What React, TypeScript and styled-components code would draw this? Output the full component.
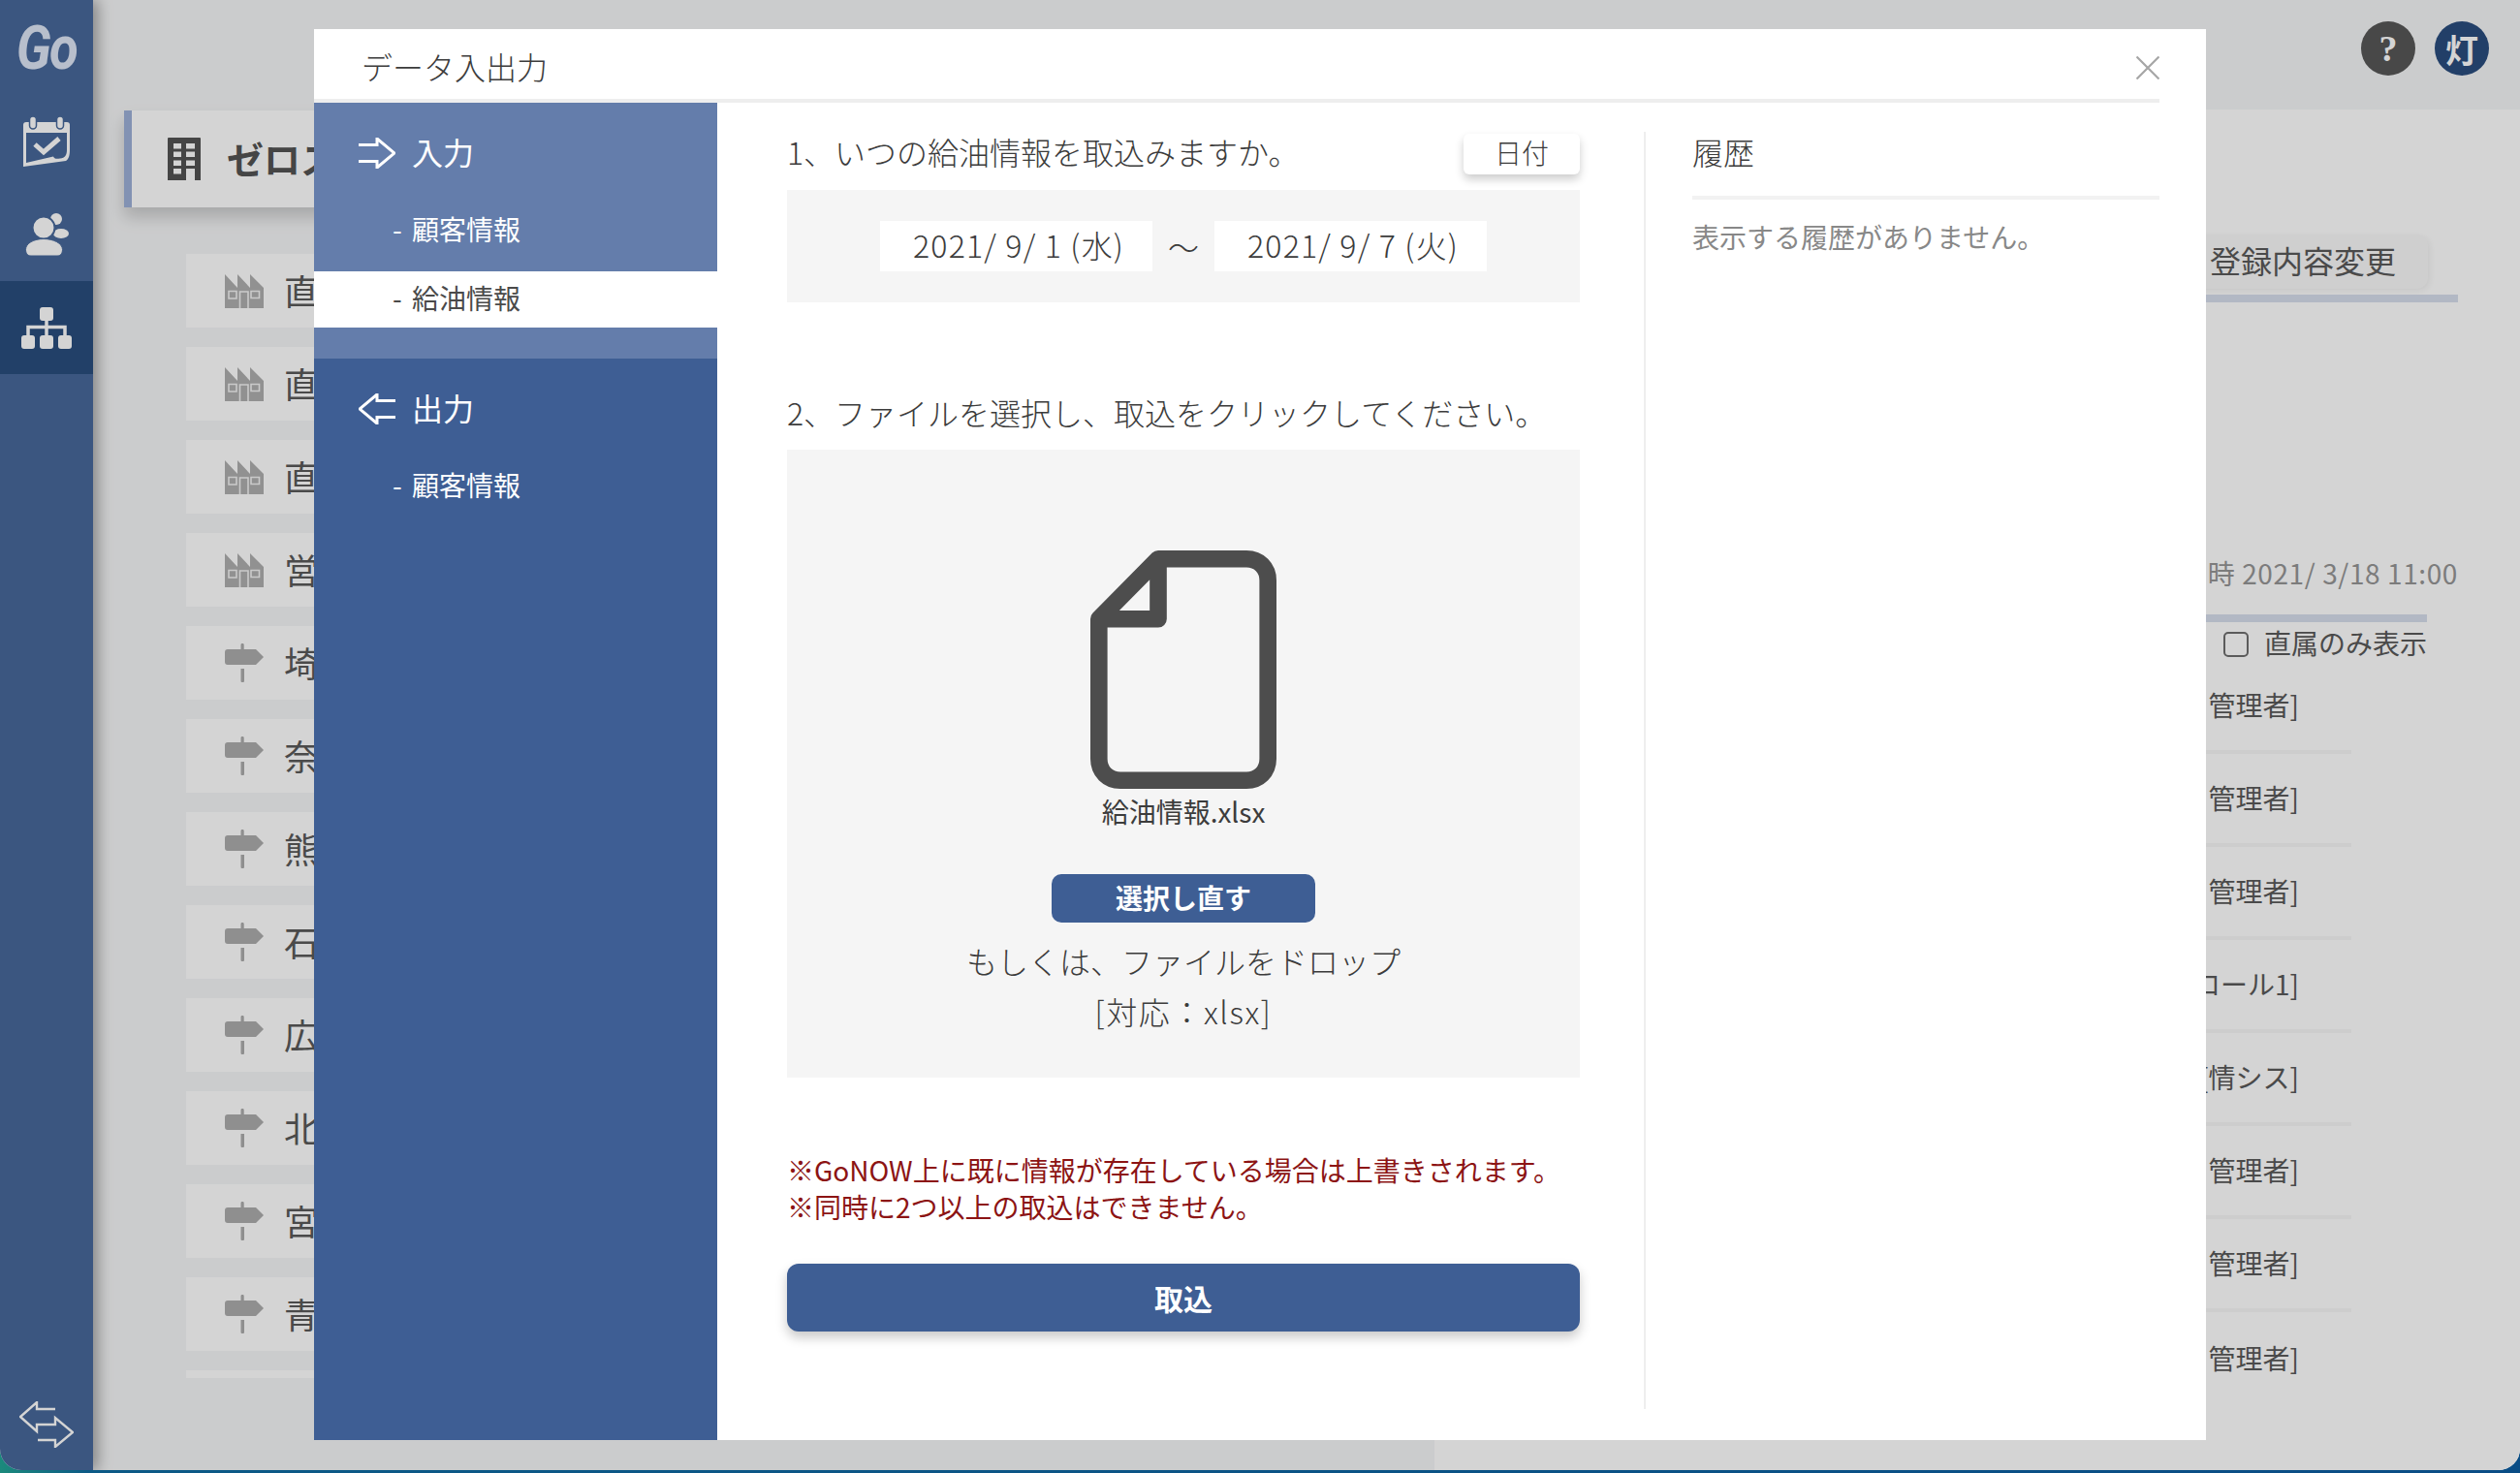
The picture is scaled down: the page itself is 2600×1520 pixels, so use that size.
import React from 'react';
import styled, { createGlobalStyle } from 'styled-components';

const GlobalStyle = createGlobalStyle`
  html, body {
    margin: 0;
    padding: 0;
  }
  body {
    width: 2600px;
    height: 1520px;
    overflow: hidden;
    font-family: "Noto Sans CJK JP", "Noto Sans", sans-serif;
    font-weight: 300;
    color: #3c3c3c;
  }
  * {
    box-sizing: border-box;
  }
`;

const Desktop = styled.div`
  width: 2600px;
  height: 1520px;
  background: linear-gradient(90deg, #1c8a7c 0, #0c5a86 90px, #0a4d85 100%);
`;

const AppFrame = styled.div`
  position: relative;
  display: flex;
  width: 2600px;
  height: 1517px;
  overflow: hidden;
  border-radius: 0 0 22px 22px;
  background: #f5f6f7;
`;

const Sidebar = styled.nav`
  position: relative;
  z-index: 1;
  display: flex;
  flex-direction: column;
  width: 96px;
  background: #47689a;
  box-shadow: 5px 0 14px rgba(0, 0, 0, 0.35);
`;

const Logo = styled.div`
  display: flex;
  align-items: center;
  justify-content: center;
  height: 98px;
  font-family: "Roboto", "Liberation Sans", sans-serif;
  font-size: 62px;
  font-style: italic;
  font-weight: 700;
  letter-spacing: -2px;
  color: #dee6f6;
  transform: scaleX(0.88);
`;

const SideItem = styled.div<{ $active?: boolean }>`
  display: flex;
  align-items: center;
  justify-content: center;
  height: 96px;
  background: ${(p) => (p.$active ? '#2a4d7d' : 'transparent')};
`;

const SideFooter = styled.div`
  display: flex;
  justify-content: center;
  margin-top: auto;
  padding-bottom: 23px;
`;

const Main = styled.div`
  display: flex;
  flex: 1;
  flex-direction: column;
  min-width: 0;
`;

const TopBar = styled.header`
  display: flex;
  flex: 0 0 113px;
  justify-content: flex-end;
  gap: 20px;
  padding: 22px 32px 0 0;
`;

const Badge = styled.div<{ $color: string; $size: number }>`
  display: flex;
  align-items: center;
  justify-content: center;
  width: 56px;
  height: 56px;
  border-radius: 50%;
  font-family: "Liberation Serif", "Noto Sans CJK JP", serif;
  font-size: ${(p) => p.$size}px;
  font-weight: 700;
  color: #ffffff;
  background: ${(p) => p.$color};
`;

const Body = styled.div`
  display: flex;
  flex: 1;
  min-height: 0;
`;

const LeftColumn = styled.section`
  flex: 0 0 1384px;
  padding: 1px 0 0 32px;
`;

const CompanyCard = styled.div`
  display: flex;
  align-items: center;
  gap: 27px;
  height: 100px;
  padding-left: 37px;
  border-left: 8px solid #9db0d8;
  background: #ffffff;
  box-shadow: 0 10px 16px rgba(0, 0, 0, 0.18);
  font-size: 38px;
  font-weight: 700;
  color: #535353;
`;

const CompanyName = styled.span`
  padding-bottom: 4px;
`;

const BranchList = styled.div`
  display: flex;
  flex-direction: column;
  gap: 20px;
  height: 1160px;
  margin: 48px 0 0 64px;
  overflow: hidden;
`;

const BranchRow = styled.div`
  display: flex;
  flex: 0 0 76px;
  align-items: center;
  gap: 21px;
  padding: 0 0 0 40px;
  background: #ffffff;
  font-size: 36px;
  font-weight: 400;
  color: #595959;
`;

const BranchName = styled.span`
  padding-bottom: 2px;
`;

const RightColumn = styled.section`
  display: flex;
  flex: 1;
  flex-direction: column;
  align-items: flex-end;
  padding: 129px 64px 0 0;
  background: #ffffff;
  font-size: 28px;
  font-weight: 400;
  color: #595959;
`;

const EditButton = styled.div`
  display: flex;
  align-items: center;
  height: 56px;
  margin-right: 31px;
  padding: 0 33px 4px;
  border-radius: 12px;
  background: #f9f9f9;
  box-shadow: 2px 2px 6px rgba(0, 0, 0, 0.06);
  font-size: 32px;
`;

const Rule = styled.div<{ $inset?: number }>`
  width: calc(100% - ${(p) => p.$inset ?? 0}px);
  height: 8px;
  margin-right: ${(p) => p.$inset ?? 0}px;
  background: #d6deec;
`;

const TopRule = styled(Rule)`
  margin-top: 6px;
`;

const Stamp = styled.div`
  height: 40px;
  margin-top: 259px;
  margin-bottom: 23px;
  line-height: 40px;
  letter-spacing: 0.6px;
  color: #969696;
`;

const CheckRow = styled.label`
  display: flex;
  align-items: center;
  gap: 16px;
  height: 26px;
  margin: 10px 32px 0 0;
`;

const CheckLabel = styled.span`
  padding-bottom: 4px;
`;

const CheckBox = styled.span`
  width: 26px;
  height: 26px;
  border: 2px solid #6e6e6e;
  border-radius: 5px;
`;

const StaffList = styled.div`
  display: flex;
  flex-direction: column;
  width: 100%;
  margin-top: 4px;
  padding-right: 110px;
`;

const StaffRow = styled.div`
  display: flex;
  align-items: center;
  justify-content: flex-end;
  height: 96px;
  padding: 0 54px 3px 0;
  border-bottom: 4px solid #f7f7f7;

  &:last-child {
    border-bottom: none;
  }
`;

const Scrim = styled.div`
  position: absolute;
  inset: 0;
  z-index: 2;
  padding: 30px 0 0 324px;
  background: rgba(0, 0, 0, 0.17);
`;

const Modal = styled.div`
  display: flex;
  flex-direction: column;
  width: 1952px;
  height: 1456px;
  background: #ffffff;
`;

const ModalHeader = styled.header`
  display: flex;
  flex: 0 0 76px;
  align-items: center;
  justify-content: space-between;
  margin-right: 48px;
  padding: 8px 0 0 49px;
  border-bottom: 4px solid #eeeeee;
`;

const ModalTitle = styled.h2`
  margin: 0;
  padding-bottom: 4px;
  font-size: 32px;
  font-weight: 300;
  line-height: 40px;
`;

const ModalBody = styled.div`
  display: flex;
  flex: 1;
  min-height: 0;
`;

const SideNav = styled.nav`
  flex: 0 0 416px;
  background: #3e5e94;
  color: #ffffff;
`;

const NavGroup = styled.div<{ $current?: boolean }>`
  padding-bottom: ${(p) => (p.$current ? 32 : 0)}px;
  background: ${(p) => (p.$current ? '#647dab' : 'transparent')};
`;

const NavHead = styled.div`
  display: flex;
  align-items: center;
  gap: 17px;
  height: 103px;
  padding: 0 0 0 46px;
  font-size: 32px;
  font-weight: 400;
`;

const NavLabel = styled.span`
  padding-bottom: 4px;
`;

const NavList = styled.div`
  display: flex;
  flex-direction: column;
  gap: 13px;
`;

const NavItem = styled.div<{ $selected?: boolean }>`
  height: 58px;
  padding-left: 81px;
  font-size: 28px;
  font-weight: 400;
  line-height: 54px;
  word-spacing: 4px;
  color: ${(p) => (p.$selected ? '#4a4a4a' : '#ffffff')};
  background: ${(p) => (p.$selected ? '#ffffff' : 'transparent')};
`;

const ImportPane = styled.div`
  display: flex;
  flex: 0 0 818px;
  flex-direction: column;
  margin-left: 72px;
  padding-top: 32px;
`;

const StepHead = styled.div`
  display: flex;
  align-items: center;
  justify-content: space-between;
  height: 42px;
  font-size: 32px;
`;

const StepText = styled.span`
  padding-bottom: 6px;
`;

const DateTypeButton = styled.div`
  display: flex;
  align-items: center;
  justify-content: center;
  width: 120px;
  height: 42px;
  padding-bottom: 5px;
  border-radius: 6px;
  background: #ffffff;
  box-shadow: 0 5px 10px rgba(0, 0, 0, 0.2);
  font-size: 28px;
`;

const RangeBox = styled.div`
  display: flex;
  align-items: center;
  justify-content: center;
  height: 116px;
  margin-top: 16px;
  background: #f5f5f5;
  font-size: 32px;
`;

const DateField = styled.div`
  width: 281px;
  height: 52px;
  padding-left: 34px;
  background: #ffffff;
  line-height: 48px;
  letter-spacing: 1.2px;
  white-space: nowrap;
`;

const RangeMark = styled.div`
  width: 64px;
  text-align: center;
`;

const SecondStep = styled(StepHead)`
  height: 44px;
  margin-top: 94px;
`;

const DropBox = styled.div`
  display: flex;
  flex-direction: column;
  align-items: center;
  height: 648px;
  margin-top: 14px;
  padding-top: 104px;
  background: #f5f5f5;
`;

const FileName = styled.div`
  margin: 3px 0 1px;
  font-size: 28px;
  font-weight: 400;
  line-height: 40px;
`;

const ReselectButton = styled.div`
  display: flex;
  align-items: center;
  justify-content: center;
  width: 272px;
  height: 50px;
  margin-top: 44px;
  padding-bottom: 2px;
  border-radius: 10px;
  background: #3e5e94;
  font-size: 28px;
  font-weight: 700;
  color: #ffffff;
`;

const DropHint = styled.div`
  margin-top: 13px;
  font-size: 32px;
  line-height: 52px;
  text-align: center;
`;

const FormatHint = styled.div`
  letter-spacing: 1.6px;
`;

const Notes = styled.div`
  margin-top: 76px;
  font-size: 28px;
  font-weight: 400;
  line-height: 38px;
  color: #8c1414;
`;

const SubmitButton = styled.div`
  display: flex;
  align-items: center;
  justify-content: center;
  height: 70px;
  margin-top: 40px;
  border-radius: 12px;
  background: #3e5e94;
  box-shadow: 0 6px 12px rgba(0, 0, 0, 0.22);
  font-size: 30px;
  font-weight: 700;
  color: #ffffff;
`;

const PaneDivider = styled.div`
  flex: 0 0 2px;
  margin: 30px 0 32px 66px;
  background: #eeeeee;
`;

const HistoryPane = styled.div`
  flex: 1;
  margin-left: 48px;
  padding: 32px 48px 0 0;
`;

const HistoryTitle = styled.div`
  height: 68px;
  border-bottom: 4px solid #f2f2f2;
  font-size: 32px;
  line-height: 36px;
`;

const HistoryEmpty = styled.div`
  margin-top: 18px;
  font-size: 28px;
  font-weight: 400;
  line-height: 40px;
  color: #888888;
`;

const CalendarIcon = () => (
  <svg width="48" height="52" viewBox="0 0 48 52">
    <path fill="#fff" d="M3 6h42a3 3 0 0 1 3 3v8H0V9a3 3 0 0 1 3-3z" />
    <path
      fill="#fff"
      fillRule="evenodd"
      d="M0 17V52L44 46C47 44 48 40 48 35V17ZM3 17V48L31 41.5C32 44 34 44 38 43.5C43 43 45 40 45 35V17Z"
    />
    <rect x="6.5" y="0" width="7" height="13" rx="3.5" fill="#fff" stroke="#47689a" strokeWidth="1.5" />
    <rect x="34.5" y="0" width="7" height="13" rx="3.5" fill="#fff" stroke="#47689a" strokeWidth="1.5" />
    <path d="M12 29l9 8 16-14" fill="none" stroke="#fff" strokeWidth="5" />
  </svg>
);

const UsersIcon = () => (
  <svg width="45" height="44" viewBox="0 0 45 44">
    <circle cx="32" cy="6" r="6" fill="#fff" />
    <ellipse cx="37" cy="21" rx="8" ry="5" fill="#fff" />
    <circle cx="19" cy="15" r="11.500" fill="#fff" stroke="#47689a" strokeWidth="2" />
    <path
      fill="#fff"
      stroke="#47689a"
      strokeWidth="1"
      d="M0.5 37.5C0.5 31 9 26.5 19 26.5S38.5 31 38.5 37.5C38.5 41.5 36.5 44 33 44H6C2.5 44 .5 41.5 .5 37.5Z"
    />
  </svg>
);

const OrgIcon = () => (
  <svg width="52" height="43" viewBox="0 0 52 43">
    <path d="M26 14V29M7 29V20.5H45V29" fill="none" stroke="#fff" strokeWidth="3.5" />
    <rect x="19" y="0" width="14" height="14" rx="3" fill="#fff" />
    <rect x="0" y="29" width="14" height="14" rx="3" fill="#fff" />
    <rect x="19" y="29" width="14" height="14" rx="3" fill="#fff" />
    <rect x="38" y="29" width="14" height="14" rx="3" fill="#fff" />
  </svg>
);

const SwapIcon = () => (
  <svg width="56" height="48" viewBox="0 0 56 48">
    <path
      d="M37 8H18V1L1 16L18 31V24H37V17L55 32L37 47V40H19"
      fill="none"
      stroke="#fff"
      strokeWidth="2.4"
    />
  </svg>
);

const BuildingIcon = () => (
  <svg width="34" height="44" viewBox="0 0 34 44">
    <path
      fill="#535353"
      fillRule="evenodd"
      d="M1 0H33a1 1 0 0 1 1 1V44H0V1a1 1 0 0 1 1-1ZM6 6v5.5h8V6ZM19 6v5.5h9V6ZM6 14.500v5.500h8v-5.500ZM19 14.500v5.500h9v-5.500ZM6 23.500v5.500h8v-5.500ZM19 23.500v5.500h9v-5.500ZM6 32v5.500h8V32ZM19 32v12h9V32Z"
    />
  </svg>
);

const FactoryIcon = () => (
  <svg width="40" height="35" viewBox="0 0 40 35">
    <path fill="#afafaf" d="M0 0L13 14V0L26 14V0L40 14V35H0Z" />
    <path
      fill="none"
      stroke="#ffffff"
      strokeOpacity="0.85"
      strokeWidth="1.6"
      d="M4 17.500h8v7.500H4ZM27 17.500h8.500v7H27ZM15.500 35V18h8.500v17"
    />
  </svg>
);

const SignIcon = () => (
  <svg width="40" height="40" viewBox="0 0 40 40">
    <path
      fill="#acacac"
      d="M16.500 1.500a1.600 1.600 0 0 1 3.200 0V6H32L40 14L32 22H3a3 3 0 0 1-3-3V9a3 3 0 0 1 3-3H16.500ZM16.500 26h3.500v12.500a1.700 1.700 0 0 1-3.500 0Z"
    />
  </svg>
);

const ArrowIcon = styled.svg<{ $flip?: boolean }>`
  flex: 0 0 38px;
  transform: ${(p) => (p.$flip ? 'scaleX(-1)' : 'none')};
`;

const OpenArrow = ({ flip }: { flip?: boolean }) => (
  <ArrowIcon $flip={flip} width="38" height="32" viewBox="0 0 38 32">
    <path d="M0 7.500H19V1L37 16L19 31V24.500H0" fill="none" stroke="#ffffff" strokeWidth="3" />
  </ArrowIcon>
);

const CloseIcon = () => (
  <svg width="24" height="24" viewBox="0 0 24 24">
    <path d="M0.500 0.500L23.500 23.500M23.500 0.500L0.500 23.500" fill="none" stroke="#a6a6a6" strokeWidth="2.200" />
  </svg>
);

const FileIcon = () => (
  <svg width="192" height="246" viewBox="0 0 192 246">
    <path
      fill="none"
      stroke="#4d4d4d"
      strokeWidth="17.600"
      strokeLinejoin="round"
      d="M70 8.800H161C174 8.800 183.200 18 183.200 31V215C183.200 228 174 237.200 161 237.200H31C18 237.200 8.800 228 8.800 215V70.800ZM70 8.800V70.800H8.800"
    />
  </svg>
);

const branches = [
  { name: '直', kind: 'factory' },
  { name: '直', kind: 'factory' },
  { name: '直', kind: 'factory' },
  { name: '営', kind: 'factory' },
  { name: '埼', kind: 'sign' },
  { name: '奈', kind: 'sign' },
  { name: '熊', kind: 'sign' },
  { name: '石', kind: 'sign' },
  { name: '広', kind: 'sign' },
  { name: '北', kind: 'sign' },
  { name: '宮', kind: 'sign' },
  { name: '青', kind: 'sign' },
  { name: '', kind: 'none' },
];

const staff = ['管理者]', '管理者]', '管理者]', 'ロール1]', '[情シス]', '管理者]', '管理者]', '管理者]'];

export default function App() {
  return (
    <Desktop>
      <GlobalStyle />
      <AppFrame>
        <Sidebar>
          <Logo>Go</Logo>
          <SideItem>
            <CalendarIcon />
          </SideItem>
          <SideItem>
            <UsersIcon />
          </SideItem>
          <SideItem $active>
            <OrgIcon />
          </SideItem>
          <SideFooter>
            <SwapIcon />
          </SideFooter>
        </Sidebar>
        <Main>
          <TopBar>
            <Badge $color="#575757" $size={38}>?</Badge>
            <Badge $color="#2a4c7d" $size={34}>灯</Badge>
          </TopBar>
          <Body>
            <LeftColumn>
              <CompanyCard>
                <BuildingIcon />
                <CompanyName>ゼロス</CompanyName>
              </CompanyCard>
              <BranchList>
                {branches.map((branch, index) => (
                  <BranchRow key={index}>
                    {branch.kind === 'factory' && <FactoryIcon />}
                    {branch.kind === 'sign' && <SignIcon />}
                    <BranchName>{branch.name}</BranchName>
                  </BranchRow>
                ))}
              </BranchList>
            </LeftColumn>
            <RightColumn>
              <EditButton>登録内容変更</EditButton>
              <TopRule />
              <Stamp>日時 2021/ 3/18 11:00</Stamp>
              <Rule $inset={32} />
              <CheckRow>
                <CheckBox />
                <CheckLabel>直属のみ表示</CheckLabel>
              </CheckRow>
              <StaffList>
                {staff.map((role, index) => (
                  <StaffRow key={index}>{role}</StaffRow>
                ))}
              </StaffList>
            </RightColumn>
          </Body>
        </Main>
        <Scrim>
          <Modal>
            <ModalHeader>
              <ModalTitle>データ入出力</ModalTitle>
              <CloseIcon />
            </ModalHeader>
            <ModalBody>
              <SideNav>
                <NavGroup $current>
                  <NavHead>
                    <OpenArrow />
                    <NavLabel>入力</NavLabel>
                  </NavHead>
                  <NavList>
                    <NavItem>- 顧客情報</NavItem>
                    <NavItem $selected>- 給油情報</NavItem>
                  </NavList>
                </NavGroup>
                <NavGroup>
                  <NavHead>
                    <OpenArrow flip />
                    <NavLabel>出力</NavLabel>
                  </NavHead>
                  <NavList>
                    <NavItem>- 顧客情報</NavItem>
                  </NavList>
                </NavGroup>
              </SideNav>
              <ImportPane>
                <StepHead>
                  <StepText>1、いつの給油情報を取込みますか。</StepText>
                  <DateTypeButton>日付</DateTypeButton>
                </StepHead>
                <RangeBox>
                  <DateField>2021/ 9/ 1 (水)</DateField>
                  <RangeMark>～</RangeMark>
                  <DateField>2021/ 9/ 7 (火)</DateField>
                </RangeBox>
                <SecondStep>
                  <StepText>2、ファイルを選択し、取込をクリックしてください。</StepText>
                </SecondStep>
                <DropBox>
                  <FileIcon />
                  <FileName>給油情報.xlsx</FileName>
                  <ReselectButton>選択し直す</ReselectButton>
                  <DropHint>
                    もしくは、ファイルをドロップ
                    <FormatHint>[対応：xlsx]</FormatHint>
                  </DropHint>
                </DropBox>
                <Notes>
                  ※GoNOW上に既に情報が存在している場合は上書きされます。
                  <br />
                  ※同時に2つ以上の取込はできません。
                </Notes>
                <SubmitButton>取込</SubmitButton>
              </ImportPane>
              <PaneDivider />
              <HistoryPane>
                <HistoryTitle>履歴</HistoryTitle>
                <HistoryEmpty>表示する履歴がありません。</HistoryEmpty>
              </HistoryPane>
            </ModalBody>
          </Modal>
        </Scrim>
      </AppFrame>
    </Desktop>
  );
}
